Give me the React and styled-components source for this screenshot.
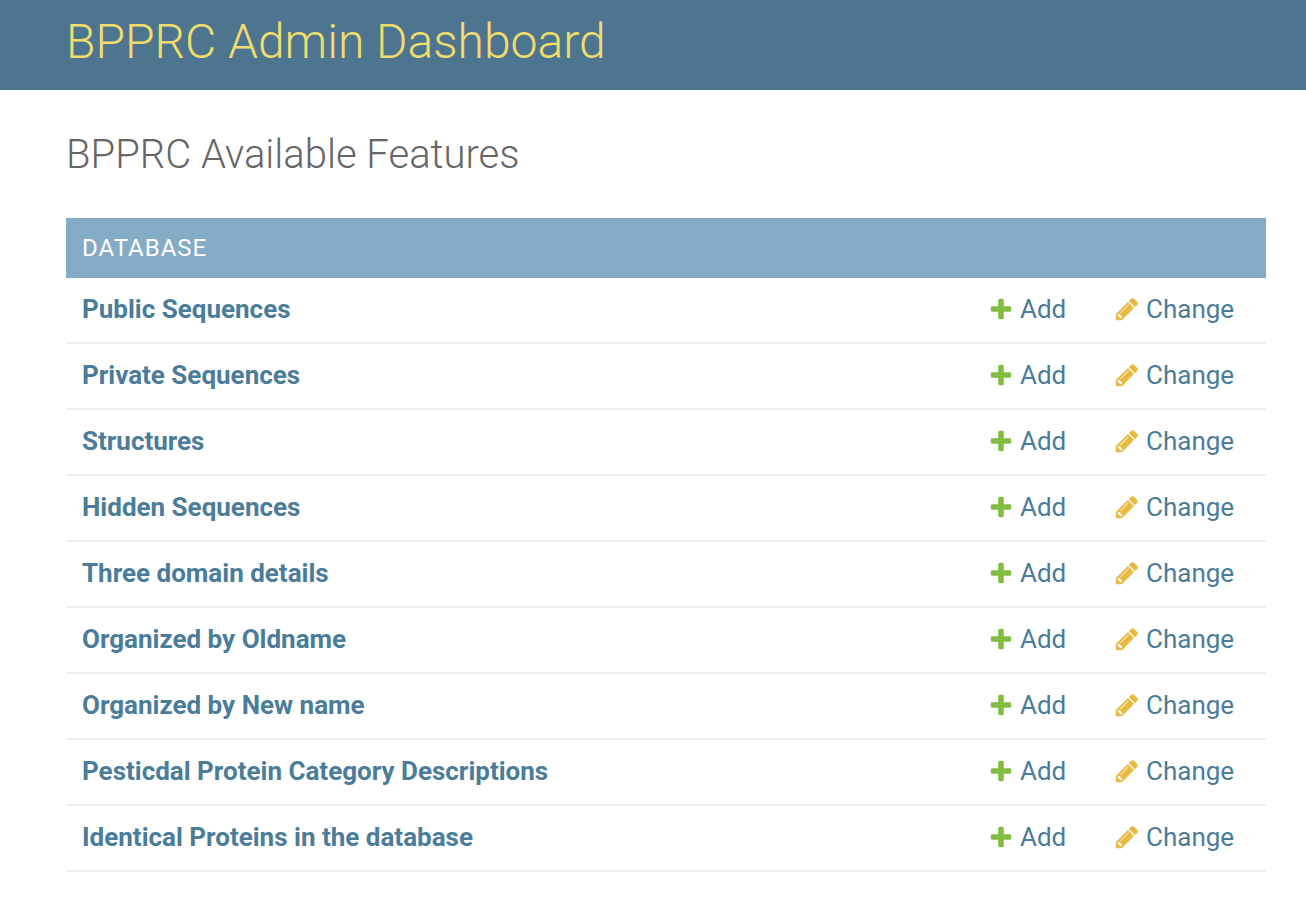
import React from "react";
import styled, { createGlobalStyle } from "styled-components";

const GlobalStyle = createGlobalStyle`
  *, *::before, *::after { box-sizing: border-box; }
  body {
    margin: 0;
    background: #fff;
    color: #333;
    font-family: Roboto, "Liberation Sans", sans-serif;
    font-size: 26px;
  }
`;

const Header = styled.header`
  display: flex;
  align-items: center;
  padding: 14px 40px 20px 66px;
  background: #4e758f;
`;

const Branding = styled.h1`
  margin: 0;
  color: #f0dd6c;
  font-size: 48px;
  font-weight: 300;
  line-height: 56px;
`;

const Content = styled.main`
  padding: 40px 40px 28px 66px;
`;

const Title = styled.h2`
  margin: 0 0 38px;
  color: #666;
  font-size: 40px;
  font-weight: 300;
  line-height: 50px;
`;

const Module = styled.table`
  width: 100%;
  border-collapse: separate;
  border-spacing: 0;
`;

const Caption = styled.caption`
  padding: 0 16px;
  background: #85acc6;
  color: #fff;
  font-size: 24px;
  font-weight: 400;
  letter-spacing: 1px;
  line-height: 60px;
  text-align: left;
  text-transform: uppercase;
`;

const cell = `
  padding: 15px 16px 17px;
  border-bottom: 2px solid #eee;
  line-height: 32px;
  text-align: left;
  vertical-align: middle;
`;

const NameCell = styled.th`${cell}`;

const ActionCell = styled.td`
  ${cell}
  width: ${(p) => p.$width};
`;

const Link = styled.a`
  display: flex;
  align-items: center;
  gap: 6px;
  color: #4b7c99;
  font-weight: ${(p) => (p.$strong ? 700 : 400)};
  text-decoration: none;
`;

const Icon = styled.svg`
  flex: none;
  width: 26px;
  height: 26px;
`;

const AddIcon = () => (
  <Icon viewBox="0 0 1792 1792" fill="#82bc41" aria-hidden="true">
    <path d="M1600 796v192q0 40-28 68t-68 28h-416v416q0 40-28 68t-68 28h-192q-40 0-68-28t-28-68v-416h-416q-40 0-68-28t-28-68v-192q0-40 28-68t68-28h416v-416q0-40 28-68t68-28h192q40 0 68 28t28 68v416h416q40 0 68 28t28 68z" />
  </Icon>
);

const ChangeIcon = () => (
  <Icon viewBox="0 0 1792 1792" fill="#e8ba40" aria-hidden="true">
    <path d="M491 1536l91-91-235-235-91 91v107h128v128h107zm523-928q0-22-22-22-10 0-17 7l-542 542q-7 7-7 17 0 22 22 22 10 0 17-7l542-542q7-7 7-17zm-54-192l416 416-832 832h-416v-416zm683 96q0 53-37 90l-166 166-416-416 166-165q36-38 90-38 53 0 91 38l235 234q37 39 37 91z" />
  </Icon>
);

const models = [
  "Public Sequences",
  "Private Sequences",
  "Structures",
  "Hidden Sequences",
  "Three domain details",
  "Organized by Oldname",
  "Organized by New name",
  "Pesticdal Protein Category Descriptions",
  "Identical Proteins in the database",
];

export default function App() {
  return (
    <>
      <GlobalStyle />
      <Header>
        <Branding>BPPRC Admin Dashboard</Branding>
      </Header>
      <Content>
        <Title>BPPRC Available Features</Title>
        <Module>
          <Caption>Database</Caption>
          <tbody>
            {models.map((name) => (
              <tr key={name}>
                <NameCell scope="row">
                  <Link href="#" $strong>{name}</Link>
                </NameCell>
                <ActionCell $width="126px">
                  <Link href="#"><AddIcon />Add</Link>
                </ActionCell>
                <ActionCell $width="168px">
                  <Link href="#"><ChangeIcon />Change</Link>
                </ActionCell>
              </tr>
            ))}
          </tbody>
        </Module>
      </Content>
    </>
  );
}
